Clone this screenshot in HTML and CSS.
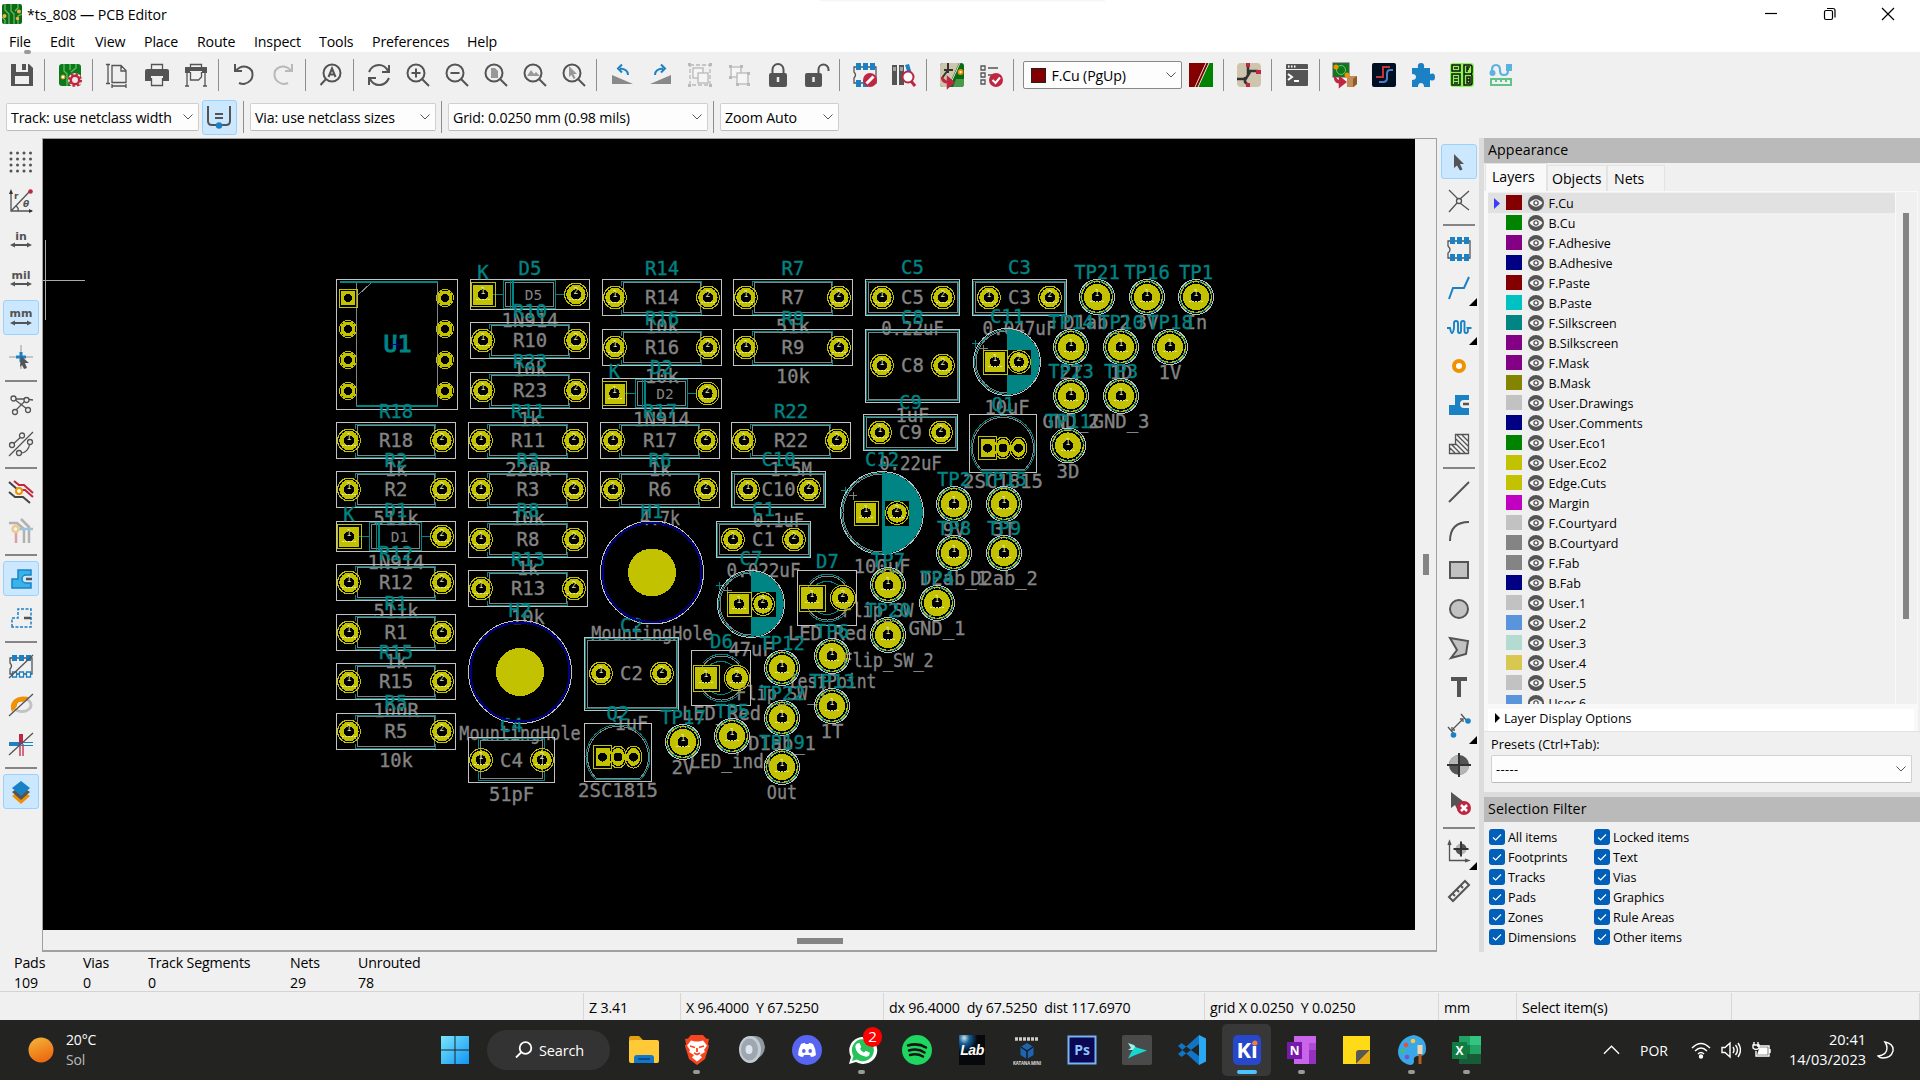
FILE: index.html
```html
<!DOCTYPE html>
<html lang="en">
<head>
<meta charset="utf-8">
<title>*ts_808 — PCB Editor</title>
<link rel="stylesheet" href="styles.css">
</head>
<body>
<div class="window">
  <header class="titlebar">
    <svg class="app-icon" viewBox="0 0 20 20"><rect width="20" height="20" rx="2" fill="#0b6b16"/><path d="M3 0v6l4 4v10M9 0v7l3 3v10M16 0v4l-3 3M20 10l-4 2v8M0 13l3 3v4" fill="none" stroke="#6cc069" stroke-width="1.2"/><g fill="#f6b13c"><circle cx="2.5" cy="12" r="2"/><circle cx="17" cy="7.500" r="2"/><circle cx="15.500" cy="14.500" r="1.700"/></g></svg>
    <span class="title">*ts_808 — PCB Editor</span>
    <span class="notch"></span>
    <div class="controls">
      <svg viewBox="0 0 14 14"><path d="M1 6.500h12"/></svg>
      <svg viewBox="0 0 14 14"><rect x="1.500" y="3.500" width="8" height="9" rx="1.500"/><path d="M4 1.500h6q2 0 2 2v7"/></svg>
      <svg viewBox="0 0 14 14"><path d="M1 1l12 12M13 1L1 13"/></svg>
    </div>
  </header>
  <nav class="menubar"><span>File</span><span>Edit</span><span>View</span><span>Place</span><span>Route</span><span>Inspect</span><span>Tools</span><span>Preferences</span><span>Help</span></nav>

  <div class="toolbar">
    <i><svg viewBox="0 0 24 24"><path fill="#545454" fill-rule="evenodd" d="M1 1h18l4 4v18H1zM6 1v8h12V1h-2v6h-4V1zM5 13v8h14v-8z"/></svg></i><b></b>
    <i><svg viewBox="0 0 24 24"><rect x="1" y="1" width="22" height="22" rx="3" fill="#0b7a1a"/><path d="M6 1v7l3 3v12M12 1v6M18 1v4l-5 4" fill="none" stroke="#63bb63" stroke-width="1.300"/><circle cx="5" cy="14" r="2" fill="#fff" stroke="#f29100"/><circle cx="17" cy="17" r="7" fill="#f0e6e6"/><circle cx="17" cy="17" r="4.200" fill="none" stroke="#bf2641" stroke-width="2.500"/><circle cx="17" cy="17" r="6" fill="none" stroke="#bf2641" stroke-width="2" stroke-dasharray="2.400 2.300"/></svg></i><b></b>
    <i><svg viewBox="0 0 24 24" class="ln"><path d="M6 2.500h9l5 5v12H6zM15 3v5h5M2 1v20M0 1.500h4M0 20.500h4M6 23h14M6 21v4M20 21v4"/></svg></i>
    <i><svg viewBox="0 0 24 24"><path class="ln" d="M6.500 7V1.500h11V7M6.500 15v7.500h11V15"/><path fill="#545454" d="M2 6h20q2 0 2 2v10h-6v-5H6v5H0V8q0-2 2-2z"/></svg></i>
    <i><svg viewBox="0 0 24 24"><path class="ln" d="M6.500 5V1.500h11V5M6.500 9v8h8l3-3V9M3 10v12.500M21 10v12.500M1 23h4M19 23h4"/><path fill="#545454" d="M1 4h22v6h-5V8H6v2H1z"/></svg></i><b></b>
    <i><svg viewBox="0 0 24 24" class="ln h"><path d="M3 1v7h7M3.500 8Q9 2 15 4t5.500 8.500T12 21q-3 0-5-1"/></svg></i>
    <i class="dim"><svg viewBox="0 0 24 24" class="ln h"><path d="M21 1v7h-7M20.500 8Q15 2 9 4t-5.500 8.500T12 21q3 0 5-1"/></svg></i><b></b>
    <i><svg viewBox="0 0 24 24" class="ln h"><circle cx="13" cy="10" r="8.500"/><path d="M7 16l-5.500 6"/><path d="M9.500 14L13 5.500 16.500 14M10.500 11.500h5"/></svg></i><b></b>
    <i><svg viewBox="0 0 24 24" class="ln h"><path d="M2 9Q5 2 12 2q6 0 9 6M22 2v7h-7M22 15q-3 7-10 7-6 0-9-6M2 22v-7h7"/></svg></i>
    <i><svg viewBox="0 0 24 24" class="ln h"><circle cx="10" cy="10" r="8.500"/><path d="M16 16l7 7M5.500 10h9M10 5.500v9"/></svg></i>
    <i><svg viewBox="0 0 24 24" class="ln h"><circle cx="10" cy="10" r="8.500"/><path d="M16 16l7 7M5.500 10h9"/></svg></i>
    <i><svg viewBox="0 0 24 24" class="ln h"><circle cx="10" cy="10" r="8.500"/><path d="M16 16l7 7"/><path d="M7 5h4l3 3v7H7z" fill="#989898" stroke="none"/></svg></i>
    <i><svg viewBox="0 0 24 24" class="ln h"><circle cx="10" cy="10" r="8.500"/><path d="M16 16l7 7"/><path d="M4 13l4-6 3 4 2-2 4 4z" fill="#989898" stroke="none"/></svg></i>
    <i><svg viewBox="0 0 24 24" class="ln h"><circle cx="10" cy="10" r="8.500"/><path d="M16 16l7 7"/><path d="M7 3v11l2.500-2 2 4 2-1-2-4h3.500z" fill="#989898" stroke="none"/></svg></i><b></b>
    <i><svg viewBox="0 0 24 24"><path fill="#898989" d="M2 12v9h21z"/><path d="M18 12q0-6-8-6.500M12 1.500L8 5.500l4 4" fill="none" stroke="#1a81c4" stroke-width="2"/></svg></i>
    <i><svg viewBox="0 0 24 24"><path fill="#898989" d="M22 12v9H1z"/><path d="M6 12q0-6 8-6.500M12 1.500l4 4-4 4" fill="none" stroke="#1a81c4" stroke-width="2"/></svg></i>
    <i class="dim"><svg viewBox="0 0 24 24" class="ln"><rect x="2" y="2" width="20" height="20" stroke-dasharray="4 2"/><rect x="5" y="5" width="10" height="10" fill="#fff"/><rect x="10" y="10" width="10" height="10" fill="#fff"/><path d="M0 0h3v3H0zM21 0h3v3h-3zM0 21h3v3H0zM21 21h3v3h-3z" fill="#545454" stroke="none"/></svg></i>
    <i class="dim"><svg viewBox="0 0 24 24" class="ln"><rect x="4" y="4" width="10" height="10" fill="#fff"/><rect x="10" y="10" width="11" height="11" fill="#fff"/><path d="M2 2h3v3H2zM13 2h3v3h-3zM2 13h3v3H2zM20 9h3v3h-3zM9 20h3v3H9zM20 20h3v3h-3z" fill="#545454" stroke="none"/></svg></i>
    <i><svg viewBox="0 0 24 24"><path d="M6.500 12V6.500a5.500 5.500 0 0 1 11 0V12" fill="none" stroke="#545454" stroke-width="2"/><rect x="3" y="10" width="18" height="14" rx="2" fill="#545454"/><path d="M12 14v5" stroke="#eee" stroke-width="2.500"/></svg></i>
    <i><svg viewBox="0 0 24 24"><path d="M13.500 12V6.500a5 5 0 0 1 10 0V8" fill="none" stroke="#545454" stroke-width="2"/><rect x="0" y="10" width="17" height="14" rx="2" fill="#545454"/><path d="M8.500 14v5" stroke="#eee" stroke-width="2.500"/></svg></i><b></b>
    <i><svg viewBox="0 0 24 24"><path class="ln" d="M1 4h22v16H1v-5q3-3 0-6z"/><path fill="#1a81c4" d="M3 0h5v7H3zM10 0h5v7h-5zM17 0h5v7h-5zM3 17h5v7H3zM10 17h5v7h-5z"/><circle cx="17" cy="17" r="7" fill="#bf2641"/><path d="M13.500 20.500l7-7" stroke="#fff" stroke-width="3"/></svg></i>
    <i><svg viewBox="0 0 24 24"><path fill="#545454" d="M0 2h5v20H0zM7 2h5v20H7z"/><path stroke="#f0f0f0" d="M1 5h3M1 7h3M8 5h3M8 7h3"/><path fill="#1a81c4" d="M13 2l4-1 3 10-3 3z"/><circle cx="16" cy="14" r="5.500" fill="#fff" stroke="#bf2641" stroke-width="2"/><path d="M19 18l4 5" stroke="#bf2641" stroke-width="3"/></svg></i><b></b>
    <i><svg viewBox="0 0 24 24"><rect width="24" height="24" rx="3" fill="#0b6a16"/><path fill="#cfc4ac" d="M3 0h16L8 24H3q-3 0-3-3V3q0-3 3-3z"/><path fill="#4b9a4b" d="M16 16h8v5q0 3-3 3h-8z"/><path d="M8 0v10M4 7h9M8 7l-6 8" stroke="#333" stroke-width="2"/><path d="M20 0L9 24" stroke="#ddd"/><circle cx="20.500" cy="9" r="2" fill="#fff" stroke="#f29100" stroke-width="1.800"/><path d="M2 14q0 6 7 5.500M8 15l5 4.500L8 24z" stroke="#bf2641" stroke-width="2.500" fill="#bf2641"/></svg></i>
    <i><svg viewBox="0 0 24 24"><path class="ln" d="M2 3h4v4H2zM2 10h4v4H2zM2 17h4v4H2zM9 5h10M9 12h6"/><circle cx="17" cy="17" r="7" fill="#bf2641"/><path d="M13.500 17l3 3 4.500-5.500" fill="none" stroke="#fff" stroke-width="2"/></svg></i><b></b>
    <div class="combo layer"><em></em><span>F.Cu (PgUp)</span><svg viewBox="0 0 10 6"><path d="M.5.5L5 5 9.500.5"/></svg></div>
    <i class="tight"><svg viewBox="0 0 24 24"><path fill="#840000" d="M0 0h20L9 24H0z"/><path fill="#008400" d="M20 0h4v24H9z"/><path d="M17 0L6 24M20 0L9 24" stroke="#ddd"/></svg></i><b></b>
    <i><svg viewBox="0 0 24 24"><rect width="24" height="24" rx="4" fill="#cfc4ac"/><path d="M11 3v10M11 8h10M13 9l-5 8M0 16h7M8 14v5l4 4" fill="none" stroke="#333" stroke-width="2.500"/><path fill="#bf2641" d="M9 0h4v4H9zM19 7h5v4h-5zM9 20h4v4H9z"/></svg></i><b></b>
    <i><svg viewBox="0 0 24 24"><path fill="#545454" d="M1 2q0-1 1-1h20q1 0 1 1v4H1zM1 7h22v15q0 1-1 1H2q-1 0-1-1z"/><path stroke="#fff" stroke-width="2" fill="none" d="M3 3.500h1.500M6 3.500h1.500M9 3.500h1.500M3 11l4 3-4 3M9 18h5"/></svg></i><b></b>
    <i><svg viewBox="0 0 24 24"><rect x="0" y="0" width="16" height="14" fill="#0b7a1a" stroke="#545454"/><circle cx="8" cy="7" r="4.500" fill="none" stroke="#6fc06f"/><circle cx="3" cy="4" r="2.500" fill="#f29100"/><circle cx="14" cy="12" r="2.500" fill="#f29100"/><path d="M2 14q0 6 6 5M7 15l5 4-5 4z" fill="#bf2641" stroke="#bf2641" stroke-width="2.500"/><path fill="#c58c54" d="M14 15l3-2h7v8l-3 3h-7z"/><path fill="#8d5b30" d="M20 16l4-3v8l-4 3z"/></svg></i>
    <i><svg viewBox="0 0 24 24"><rect width="24" height="24" rx="2" fill="#001023"/><path d="M18 4h-7v10H4" fill="none" stroke="#c83434" stroke-width="2"/><path d="M21 7h-3q-3 0-3 4v4q0 4-4 4H7" fill="none" stroke="#4d7fc4" stroke-width="2"/></svg></i>
    <i><svg viewBox="0 0 24 24"><path fill="#1a81c4" d="M1 5h6q-1-5 3-5t3 5h6v6q5-2 5 3t-5 3v7h-6q0-4-3-4t-3 4H1v-7q4 0 4-3t-4-3z"/></svg></i>
    <i><svg viewBox="0 0 24 24"><rect width="24" height="24" rx="3" fill="#8cf650"/><path fill="none" stroke="#111" stroke-width="1.500" d="M2 2h8v6H2zM2 11h8v11H2zM14 2h6q2 0 2 2v5q0 2-2 2 2 0 2 2v7q0 2-2 2h-6zM14 11h6M4 5h4M4 14h4M4 17h4M4 20h4M17 9V4h3M17 6h2M17 14v6h3v-6zM17 17h3"/></svg></i>
    <i><svg viewBox="0 0 24 24"><path d="M3 10V7q0-5 4-5t4 5v1q0 4 4 4t4-4V2" fill="none" stroke="#59b2e0" stroke-width="2.200"/><circle cx="3.500" cy="10" r="3" fill="#59b2e0"/><path fill="#59b2e0" d="M17 1h6v7h-6z"/><path fill="none" stroke="#5fc486" stroke-width="2" d="M2 16h20v6H2zM7 16v3M12 16v3M17 16v3"/></svg></i>
  </div>

  <div class="toolbar second">
    <div class="combo track"><span>Track: use netclass width</span><svg viewBox="0 0 10 6"><path d="M.5.5L5 5 9.500.5"/></svg></div>
    <i class="on"><svg viewBox="0 0 24 24" class="ln h"><path d="M1 1v15q0 4 4 4h14q4 0 4-4V1M8 9h8M8 13h8"/><circle cx="12" cy="20.500" r="3.200" fill="#1a81c4" stroke="none"/></svg></i><b></b>
    <div class="combo via"><span>Via: use netclass sizes</span><svg viewBox="0 0 10 6"><path d="M.5.5L5 5 9.500.5"/></svg></div><b></b>
    <div class="combo grid"><span>Grid: 0.0250 mm (0.98 mils)</span><svg viewBox="0 0 10 6"><path d="M.5.5L5 5 9.500.5"/></svg></div><b></b>
    <div class="combo zoom"><span>Zoom Auto</span><svg viewBox="0 0 10 6"><path d="M.5.5L5 5 9.500.5"/></svg></div>
  </div>

  <main class="work">
    <aside class="tools">
      <i><svg viewBox="0 0 24 24"><path d="M2 3h21M2 9h21M2 15h21M2 21h21" stroke="#545454" stroke-width="3" stroke-linecap="round" stroke-dasharray="0 6.500"/></svg></i>
      <i><svg viewBox="0 0 24 24" class="ln"><path d="M2 3v19h21M2 22L21 2M7 17q3 2 2 5"/><path fill="#333" stroke="none" d="M0 5l2-5 2 5zM20 20l4 2-4 2z"/><circle cx="21.500" cy="2.500" r="2.300" fill="#bf2641" stroke="none"/><text x="5" y="10" class="ti s">r</text><text x="14" y="18" class="ti s it">θ</text></svg></i>
      <i><svg viewBox="0 0 24 24"><text x="12" y="12" class="ti">in</text><path fill="#545454" d="M1 17l5-2.500v1.500h12v-1.500l5 2.500-5 2.500V18H6v1.500z"/></svg></i>
      <i><svg viewBox="0 0 24 24"><text x="12" y="12" class="ti">mil</text><path fill="#545454" d="M1 17l5-2.500v1.500h12v-1.500l5 2.500-5 2.500V18H6v1.500z"/></svg></i>
      <i class="on"><svg viewBox="0 0 24 24"><text x="12" y="11" class="ti">mm</text><path fill="#545454" d="M1 17l5-2.500v1.500h12v-1.500l5 2.500-5 2.500V18H6v1.500z"/></svg></i>
      <i><svg viewBox="0 0 24 24"><path d="M12 0v24M0 12h24" stroke="#999"/><path d="M12 7v10M7 12h10" stroke="#1a81c4" stroke-width="3"/><path fill="#545454" d="M12 11l8 7h-4l2 5-3 1-2-4-2 2z"/></svg></i><b></b>
      <i><svg viewBox="0 0 24 24" class="ln"><path d="M5 6h12l7 1M6 18L17 7M5 6l13 10"/><g fill="#f0f0f0"><circle cx="4.500" cy="5.500" r="2.500"/><circle cx="17.500" cy="7" r="2.500"/><circle cx="6" cy="19" r="2.500"/><circle cx="19" cy="17" r="2.500"/></g></svg></i>
      <i><svg viewBox="0 0 24 24" class="ln"><path d="M0 24L24 0M3 13l10-9M10 21q9 1 11-10"/><g fill="#f0f0f0"><circle cx="3" cy="13" r="2.500"/><circle cx="13" cy="3.500" r="2.500"/><circle cx="21" cy="10" r="2.500"/><circle cx="10" cy="21" r="2.500"/></g></svg></i><b></b>
      <i><svg viewBox="0 0 24 24" fill="none" stroke-width="2"><path d="M0 2l9 8M0 12l6 5h8l7 6" stroke="#444"/><path d="M5 1l5 4h5l9 8M12 10h4l8 7" stroke="#bf2641"/><circle cx="10" cy="11" r="3" stroke="#f29100" fill="#fff"/></svg></i>
      <i class="pale"><svg viewBox="0 0 24 24" fill="none" stroke-width="2.500"><path d="M7 11v13" stroke="#bf2641"/><path d="M0 4h8l7 6v14M12 0l8 8v16" stroke="#545454"/><path d="M9 10h15" stroke="#1a81c4"/><circle cx="6.500" cy="10" r="3" stroke="#f29100" fill="#fff"/></svg></i><b></b>
      <i class="on"><svg viewBox="0 0 24 24"><path d="M3 21v-9h6V3h13v5h-5a4 4 0 0 0 0 8h5v5z" fill="#39b4ea" stroke="#1a81c4" stroke-width="1.500"/><path d="M17 12h6" stroke="#545454" stroke-width="2.500"/></svg></i>
      <i><svg viewBox="0 0 24 24"><path d="M3 21v-9h6V3h13v18z" fill="none" stroke="#1a81c4" stroke-width="1.500" stroke-dasharray="3 1.500"/><path d="M15 12h7" stroke="#545454" stroke-width="2.500"/></svg></i><b></b>
      <i><svg viewBox="0 0 24 24"><path class="ln" d="M1 4h22v16H1v-5q3-3 0-6z"/><path fill="#1a81c4" d="M3 1h5v6H3zM10 1h5v6h-5zM17 1h5v6h-5z"/><path fill="#fff" stroke="#1a81c4" stroke-width="1.300" d="M3.500 18h4v5h-4zM10.500 18h4v5h-4zM17.500 18h4v5h-4z"/><path class="ln" d="M0 24L24 1"/></svg></i>
      <i><svg viewBox="0 0 24 24"><ellipse cx="13" cy="12" rx="9" ry="6.500" fill="none" stroke="#c2c2c2" stroke-width="3"/><path d="M3 19Q0 12 5 7t15-3l-6 5q-6-1-6 4z" fill="#f29100"/><path class="ln" d="M0 23L24 1"/></svg></i>
      <i><svg viewBox="0 0 24 24"><path d="M0 12h11" stroke="#1a81c4" stroke-width="4"/><path d="M12 2v10" stroke="#bf2641" stroke-width="4"/><path d="M11 12v12M14 12v12" stroke="#bf2641" stroke-width="1.300"/><path d="M12 10.500h12M12 13.500h12" stroke="#1a81c4"/><path class="ln" d="M0 23L24 1"/></svg></i><b></b>
      <i class="on"><svg viewBox="0 0 24 24"><path fill="#f29100" d="M3 16l9-6 9 6-9 8z"/><path fill="#545454" d="M3 12l9-6 9 6-9 8z"/><path fill="#1a81c4" d="M3 8l9-7 9 7-9 8z"/></svg></i>
    </aside>

    <section class="viewport">
      <div class="board"><svg id="pcb" viewBox="43 139 1372 791" width="1372" height="791"></svg></div>
      <div class="vscroll"><span></span></div>
      <div class="hscroll"><span></span></div>
    </section>

    <aside class="tools right">
      <i class="on"><svg viewBox="0 0 24 24"><path fill="#545454" d="M7 4v14l3-2.500 3 5 2.500-1-2.500-5.500h4z"/></svg></i>
      <i><svg viewBox="0 0 24 24" class="ln"><path d="M2 1l9 9M22 2l-9 8M2 23l8-9M22 21l-9-7"/><circle cx="12" cy="12" r="2.500"/></svg></i><b></b>
      <i><svg viewBox="0 0 24 24"><path class="ln" d="M1 4h22v17H1v-5q4-3 0-7z"/><path fill="#1a81c4" d="M3 0h5v7H3zM10 0h5v7h-5zM17 0h5v7h-5zM3 17h5v7H3zM10 17h5v7h-5zM17 17h5v7h-5z"/></svg></i>
      <i class="more"><svg viewBox="0 0 24 24"><path d="M2 23l4-11h11l5-11" fill="none" stroke="#1a81c4" stroke-width="2"/></svg></i>
      <i class="more"><svg viewBox="0 0 24 24"><path d="M0 13h3q1 5 2 5t2-5V8q0-2 2-2t2 2v8q0 2 1.500 2t1.500-2V8q0-2 2-2t1.500 2v8q0 2 1.500 2 3 0 1.500-5h4" fill="none" stroke="#1a81c4" stroke-width="1.900"/></svg></i>
      <i><svg viewBox="0 0 24 24"><circle cx="12" cy="12" r="5" fill="#fff" stroke="#f29100" stroke-width="4"/></svg></i>
      <i><svg viewBox="0 0 24 24"><path d="M2 22V12h6V2h14v5h-5a4 4 0 0 0 0 8h5v7z" fill="#1a81c4"/><path d="M16 11h6" stroke="#545454" stroke-width="2.500"/></svg></i>
      <i><svg viewBox="0 0 24 24" class="ln"><path d="M2.500 21.500v-9h6v-10h13v19zM3 16l5 5M4 12l9 9M9 12l9 9M9 7l12 12M10 3l11 11M15 3l6 6" /></svg></i><b></b>
      <i><svg viewBox="0 0 24 24" class="ln h"><path d="M2 22L22 2"/></svg></i>
      <i><svg viewBox="0 0 24 24" class="ln h"><path d="M3 22Q3 3 22 3"/></svg></i>
      <i><svg viewBox="0 0 24 24" class="ln h"><rect x="3" y="4" width="18" height="16" fill="#c2c2c2"/></svg></i>
      <i><svg viewBox="0 0 24 24" class="ln h"><circle cx="12" cy="12" r="9" fill="#c2c2c2"/></svg></i>
      <i><svg viewBox="0 0 24 24" class="ln h"><path d="M3 2l18 3-2 13-15 4 6-8z" fill="#c2c2c2"/></svg></i>
      <i><svg viewBox="0 0 24 24"><path fill="#545454" d="M4 2h16v4h-6v16h-4V6H4z"/></svg></i>
      <i class="more"><svg viewBox="0 0 24 24" class="ln"><path d="M6 15L15 6M1 13l6 7M14 0l6 7"/><path d="M5 13v3h3M13 5h3v3"/><circle cx="21" cy="7" r="2.800" fill="#1a81c4" stroke="none"/><circle cx="6.500" cy="21" r="2.800" fill="#1a81c4" stroke="none"/></svg></i>
      <i><svg viewBox="0 0 24 24"><circle cx="12" cy="12" r="10" fill="#545454"/><path fill="#b5b5b5" d="M12 12V2A10 10 0 0 0 2 12zM12 12v10a10 10 0 0 0 10-10z"/><path d="M12 0v24M0 12h24" stroke="#333" stroke-width="2"/></svg></i>
      <i><svg viewBox="0 0 24 24"><path fill="#545454" d="M4 0v16l4-3 3 6 6-9z"/><circle cx="17" cy="16" r="7" fill="#bf2641"/><path d="M14 13l6 6M20 13l-6 6" stroke="#fff" stroke-width="2.500"/></svg></i><b></b>
      <i class="more"><svg viewBox="0 0 24 24" class="ln"><path d="M2.500 2v18.500H22M1 5l1.500-4L4 5M18 19l4 1.500-4 1.500"/><circle cx="14" cy="9" r="5.500" fill="#b5b5b5" stroke="none"/><path fill="#545454" stroke="none" d="M14 9V3.500A5.500 5.500 0 0 1 19.500 9zM14 9v5.500A5.500 5.500 0 0 1 8.500 9z"/><path d="M14 1.500v15M6.500 9h15" stroke="#333" stroke-width="2"/></svg></i>
      <i><svg viewBox="0 0 24 24" class="ln h"><path d="M2 18L18 2l4 4L6 22zM6 15l2 2M10 11l2 2M14 7l2 2"/></svg></i>
    </aside>

    <aside class="panel">
      <h2>Appearance</h2>
      <div class="tabs"><span class="active">Layers</span><span>Objects</span><span class="nets">Nets</span></div>
      <div class="layers"><div class="rows" id="layers"></div><div class="gutter"><span></span></div></div>
      <div class="options"><svg viewBox="0 0 5 10"><path d="M0 0l5 5-5 5z"/></svg>Layer Display Options</div>
      <div class="presets"><label>Presets (Ctrl+Tab):</label><div class="combo"><span>-----</span><svg viewBox="0 0 10 6"><path d="M.5.5L5 5 9.500.5"/></svg></div></div>
      <h2 class="filter-title">Selection Filter</h2>
      <div class="filters" id="filters"></div>
    </aside>
  </main>

  <section class="info">
    <div><span>Pads</span><span>109</span></div><div><span>Vias</span><span>0</span></div><div><span>Track Segments</span><span>0</span></div><div><span>Nets</span><span>29</span></div><div><span>Unrouted</span><span>78</span></div>
  </section>
  <footer class="status"><span></span><span>Z 3.41</span><span>X 96.4000&nbsp; Y 67.5250</span><span>dx 96.4000&nbsp; dy 67.5250&nbsp; dist 117.6970</span><span>grid X 0.0250&nbsp; Y 0.0250</span><span>mm</span><span>Select item(s)</span><span></span></footer>

  <div class="taskbar">
    <div class="weather"><svg viewBox="0 0 26 26"><defs><linearGradient id="sun" x1="0" y1="0" x2=".4" y2="1"><stop stop-color="#f3b83c"/><stop offset="1" stop-color="#ee6b10"/></linearGradient></defs><circle cx="13" cy="13" r="12.500" fill="url(#sun)"/></svg><p>20°C<br><small>Sol</small></p></div>
    <div class="apps">
      <a><svg viewBox="0 0 30 30"><defs><linearGradient id="win" x1="0" y1="0" x2="1" y2="1"><stop stop-color="#79e6fc"/><stop offset="1" stop-color="#1095f5"/></linearGradient></defs><path fill="url(#win)" d="M1 1h13.500v13.500H1zM15.500 1H29v13.500H15.500zM1 15.500h13.500V29H1zM15.500 15.500H29V29H15.500z"/></svg></a>
      <div class="search"><svg viewBox="0 0 18 18"><circle cx="10.500" cy="7" r="5.800"/><path d="M6.500 11L1 16.500"/></svg>Search</div>
      <a class="files"><svg viewBox="0 0 30 30"><path fill="#e3a012" d="M0 3q0-2 2-2h8l4 4H2v10H0z"/><rect y="5" width="30" height="23" rx="2" fill="#ffc937"/><path fill="#1178c8" d="M5 28v-5q0-3 3-3h14q3 0 3 3v5z"/><path d="M9 24h12" stroke="#0a4c8c" stroke-width="2"/></svg></a>
      <a class="run"><svg viewBox="0 0 30 30"><path fill="#f8451f" d="M9 0h12l3 3.500 3 .5-1 5 1 2-4 13-8 6-8-6L3 11l1-2-1-5 3-.5z"/><path fill="#fff" d="M9 5.500l4 1h4l4-1 4 5-3 4.500 1 2-5 3 2 2.500-5 4-5-4 2-2.500-5-3 1-2-3-4.500z"/><path d="M8 11l5 1.500M22 11l-5 1.500M15 13v4M12 18l3 1.500 3-1.500" stroke="#f8451f" stroke-width="1.800" fill="none"/></svg></a>
      <a><svg viewBox="0 0 30 30"><path fill="#8f979f" d="M13 1h6q8 1 9 11 0 5-4 9l-11 7z"/><ellipse cx="13" cy="14.500" rx="11" ry="13.500" fill="#c5cbd1"/><ellipse cx="12.500" cy="14.500" rx="8.500" ry="11" fill="#9ea7b1"/><ellipse cx="12" cy="14.500" rx="3.500" ry="4.500" fill="#dfe5ec"/></svg></a>
      <a><svg viewBox="0 0 30 30"><circle cx="15" cy="15" r="15" fill="#5865f2"/><path fill="#fff" d="M9 9q3-1.500 4-1l.5 1h3l.5-1q1-.5 4 1 3 5 3 11-2 2-5 2l-1-2h-6l-1 2q-3 0-5-2 0-6 3-11z"/><ellipse cx="11.800" cy="16" rx="1.800" ry="2" fill="#5865f2"/><ellipse cx="18.200" cy="16" rx="1.800" ry="2" fill="#5865f2"/></svg></a>
      <a class="run"><svg viewBox="0 0 30 30"><path fill="#fff" d="M2 29l2-7A14 13.500 0 1 1 9 27z"/><path fill="#25c35a" d="M5 26l1.500-5A11 11 0 1 1 10 24.500z"/><path fill="#fff" d="M10 8.500l2.500-.5 1.800 4-1.300 1.800q1.500 3 4 3.800l1.800-1.800 4 2q-.3 4-4 4-10-2-10.500-10 0-2 1.700-3.300z"/></svg><u>2</u></a>
      <a><svg viewBox="0 0 30 30"><circle cx="15" cy="15" r="15" fill="#1ed760"/><path d="M6 10.500q10-3 18 2M7 15.500q9-2.500 15.500 2M8 20q7-2 13 1.500" fill="none" stroke="#191414" stroke-width="2.500" stroke-linecap="round"/></svg></a>
      <a><svg viewBox="0 0 30 30"><defs><radialGradient id="lab" cx=".2" cy=".1"><stop stop-color="#c9e7e4"/><stop offset=".4" stop-color="#145f9c"/><stop offset="1" stop-color="#07080c"/></radialGradient></defs><path fill="url(#lab)" d="M2 0h26v30H2z"/><text x="15" y="20" class="lab">Lab</text></svg></a>
      <a><svg viewBox="0 0 30 30"><path d="M3 4h24" stroke="#ccc" stroke-width="3.500" stroke-dasharray="3 1"/><path fill="#1f65ad" d="M8.500 12l6.500-4 6.500 4v8L15 24l-6.500-4z"/><path d="M9 12l6 4 6-4M15 16v8" stroke="#101c30" stroke-width="1.500" fill="none"/><text x="15" y="29.500" class="kat">KATANA MINI</text></svg></a>
      <a><svg viewBox="0 0 30 30"><rect x="1.500" y="1.500" width="27" height="27" fill="#0c0753" stroke="#74b5f5" stroke-width="2"/><text x="15" y="20" class="ps">Ps</text></svg></a>
      <a><svg viewBox="0 0 30 30"><rect width="30" height="30" rx="2" fill="#4a4a4a"/><path fill="#a0f0e8" d="M6 8l6 2 4 5H6l3-2z"/><path fill="#15d8d0" d="M13 12l12 3.500-13 5-6 3 3-6z"/></svg></a>
      <a><svg viewBox="0 0 30 30"><path fill="#1274c4" d="M22 0L1 19l3.500 3L22 9zM1 11l3.500-3L22 21v9z"/><path fill="#2aa9f2" d="M22 0l7 3.500v23L22 30z"/></svg></a>
      <a class="active"><svg viewBox="0 0 30 30"><rect x="1" y="0" width="28" height="30" rx="5" fill="#2747cc"/><text x="15" y="23" class="ki">Ki</text><circle cx="23" cy="8" r="2.500" fill="#f47c2c"/></svg></a>
      <a class="run"><svg viewBox="0 0 30 30"><path fill="#ca64ea" d="M7 1h22v28H7z"/><path fill="#9332bf" d="M22 15h7v14h-7z"/><path fill="#ae4bd5" d="M22 8h7v7h-7z"/><path fill="#7719aa" d="M0 7h15v17H0z"/><text x="7.500" y="20" class="of">N</text></svg></a>
      <a><svg viewBox="0 0 30 30"><path fill="#ffda16" d="M1 1h27v28H1z"/><path fill="#5a5850" d="M14 29V18q0-3 3-3h11z"/><path fill="#e8ae12" d="M28 15v14H14z"/></svg></a>
      <a class="run"><svg viewBox="0 0 30 30"><path fill="#39a7e8" d="M17 0q12 2 12 14 0 6-5 7h-4q-4 1-3 5 0 4-4 4Q1 27 1 16 3 2 17 0z"/><circle cx="9" cy="10" r="2.300" fill="#e64f39"/><circle cx="16" cy="6" r="2.300" fill="#fac83c"/><circle cx="6" cy="16" r="2.300" fill="#3cc36c"/><circle cx="10" cy="22" r="2.300" fill="#7b50d4"/><path d="M23 10v9" stroke="#ead6b5" stroke-width="5"/><path d="M23 19v10" stroke="#b66020" stroke-width="3"/></svg></a>
      <a class="run"><svg viewBox="0 0 30 30"><path fill="#21a366" d="M7 1h22v28H7z"/><path fill="#33c481" d="M18 1h11v9H18z"/><path fill="#107c41" d="M7 10h11v9H7z"/><path fill="#185c37" d="M7 19h22v10H7z"/><path fill="#107c41" d="M0 7h15v17H0z"/><text x="7.500" y="20" class="of">X</text></svg></a>
    </div>
    <div class="tray">
      <svg viewBox="0 0 18 12" class="up"><path d="M1 10l8-8 8 8"/></svg><span>POR</span>
      <svg viewBox="0 0 20 18"><path d="M1 7q9-9 18 0M4 10q6-6 12 0M7 13q3-3 6 0"/><circle cx="10" cy="15.500" r="1.500" fill="#fff"/></svg>
      <svg viewBox="0 0 20 18"><path d="M1 6.500h3L9 2v14l-5-4.500H1zM12 6q2 3 0 6M14.500 4q4 5 0 10M17 2q5 7 0 14"/></svg>
      <svg viewBox="0 0 20 18"><path d="M6 5h12v10H5v-5M19 8v4M3 1v3M7 1v3M2 4h6v3q-3 3-6 0z"/><path fill="#fff" d="M9 7h7v6H7z"/></svg>
      <p>20:41<br>14/03/2023</p>
      <svg viewBox="0 0 18 18" class="moon"><path d="M8 1q9 2 8 9-2 7-10 7-3 0-5-2 9-1 9-8 0-3-2-6z"/></svg>
    </div>
  </div>
</div>
<script src="script.js"></script>
</body>
</html>
```
FILE: styles.css
```css
*{box-sizing:border-box}
body{margin:0;width:1920px;height:1080px;overflow:hidden;background:#f0f0f0;font-family:"Open Sans","Noto Sans",sans-serif;font-size:14.2px;color:#000;letter-spacing:-.15px}
.window{display:flex;flex-direction:column;height:1080px}
svg{display:block;flex:none}
p,h2{margin:0;font-weight:400}
.titlebar{height:28px;background:#fff;display:flex;align-items:center;padding-left:2px;flex:none}
.app-icon{width:20px;height:20px}
.title{margin-left:5px;width:793px;line-height:28px;padding-top:1px;letter-spacing:-.1px}
.notch{width:285px;height:2px;align-self:flex-start;background:linear-gradient(#f3f3f3,#fff)}
.controls{margin-left:auto;display:flex;gap:44.500px;margin-right:25px}
.controls svg{width:14px;height:14px;fill:none;stroke:#000;stroke-width:1.2}
.menubar{height:24px;flex:none;background:#fff;display:grid;grid-template-columns:41px 45px 49px 53px 57px 65px 53px 95px 60px;padding-left:9px;line-height:27px}
.toolbar{height:46px;flex:none;display:flex;align-items:center;padding-left:4.500px}
.toolbar.second{height:40px;padding:0 0 2px 6px;align-items:center}
i{width:35px;height:35px;margin-right:4px;display:grid;place-items:center;flex:none;font-style:normal;border-radius:3px;position:relative}
i svg{width:24px;height:24px;overflow:visible}
.toolbar b{width:2px;height:32px;background:#8e8e8e;margin:0 6.500px 0 .500px;flex:none;border-right:1px solid #f0f0f0}
.on{background:#cce8ff;border:1px solid #99d1ff}
.dim{opacity:.35}
.pale{opacity:.4}
.ln{fill:none;stroke:#545454;stroke-width:1.3}
.ln.h{stroke-width:2}
.ti{font:700 11px "DejaVu Sans",sans-serif;fill:#545454;text-anchor:middle;letter-spacing:0;stroke:none}
.ti.s{font-size:9px;text-anchor:start}.it{font-style:italic}
.combo{height:28px;background:#fdfdfd;border:1px solid #d0d0d0;border-bottom-color:#bbb;border-radius:2px;display:flex;align-items:center;justify-content:space-between;padding:0 5px 0 4px;flex:none;white-space:nowrap}
.combo svg{width:10px;height:6px;fill:none;stroke:#555}
.combo.layer{width:159px;border-color:#888;margin:0 2px 0 1px;padding-left:7px}
.combo.layer em{width:15px;height:15px;background:#840000;border:1px solid #222;margin-right:6px}
.combo.layer span{flex:1}
.track{width:193px}
.second i{margin:0 5px 0 3px;padding-right:1px}
.second b{margin:0 5.500px 0 .5px}
.via{width:186px;margin-right:4px}.grid{width:260px;margin-right:4px}.zoom{width:119px}
.work{height:814px;flex:none;display:flex}
.tools{width:42px;padding:6px 0 0 3px;flex:none}
.tools i{width:36px;margin:0 0 4px}
.tools b{display:block;height:1.500px;width:32px;background:#858585;margin:6px 0 5.500px 2px}
.tools.right{width:42px;padding-left:4px}
.more::after{content:"";position:absolute;right:0;bottom:-1px;border-left:8px solid transparent;border-bottom:8px solid #000}
.viewport{width:1395px;height:814px;border:1px solid #a0a0a0;border-bottom-width:2px;display:grid;grid-template:791px 20px/1372px 21px;flex:none}
.board{background:#000;overflow:hidden}
.vscroll{padding:415px 0 0 8px}.vscroll span{display:block;width:6px;height:21px;background:#858585}
.hscroll{padding:8px 0 0 754px}.hscroll span{display:block;width:46px;height:6px;background:#858585}
.panel{flex:1;border-left:5px solid #dcdcdc;display:flex;flex-direction:column}
.panel h2{height:25px;background:#bababa;font-size:14.200px;line-height:24px;padding-left:4px;flex:none;letter-spacing:.1px}
.tabs{height:28px;display:flex;align-items:flex-end;padding-left:1px;flex:none}
.tabs span{height:26px;border:1px solid #e3e3e3;border-bottom:0;background:#f3f3f3;line-height:25px;padding-left:4px;width:60px;letter-spacing:-.05px}
.tabs .active{height:28px;background:#f9f9f9;width:62px;padding-left:6px;line-height:25px}
.tabs .nets{width:58px;padding-left:6px}
.layers{height:518px;flex:none;display:flex;padding:1px 0 5px 4px;background:#f9f9f9;margin-right:2px;font-size:12.500px;letter-spacing:0}
.rows{width:407px;overflow:hidden;background:#f0f0f0;padding-top:1px}
.row{height:20px;display:flex;align-items:center}
.row.sel{background:#e1e1e1}
.row .mark{width:18px;padding-left:6px}
.row .mark svg{width:6px;height:11px;fill:#3c3cff}
.row em{width:16px;height:15px;margin:0 6px 1px 0}
.row .eye{width:16px;height:16px;margin-right:4.500px}
.gutter{width:21px;background:#f0f0f0;margin-left:1px;padding:21px 0 0 7px}
.gutter span{display:block;width:6px;height:406px;background:#858585}
.options{height:22px;flex:none;background:#fff;border:solid #f9f9f9;border-width:0 4px 0 4px;display:flex;align-items:center;padding-left:7px;font-size:12.600px;letter-spacing:0;margin-right:2px;padding-bottom:4px}
.options svg{width:5px;height:10px;margin-right:4px}
.presets{height:61px;flex:none;border-top:1px solid #e2e2e2;padding:3px 8px 0 7px;font-size:12.700px}
.presets label{display:block;line-height:19px;height:20px;letter-spacing:.05px}
.presets .combo{letter-spacing:.4px;height:28px}
.panel .filter-title{border-top:5px solid #dcdcdc;height:30px}
.filters{display:grid;grid-template-columns:105px 150px;grid-auto-rows:20px;padding:5px 0 0 5px;font-size:12.600px;letter-spacing:-.1px}
.filters div{display:flex;align-items:center;gap:3px}
.filters svg{width:16px;height:16px}
.info{height:40px;flex:none;display:grid;grid-template-columns:69px 65px 142px 68px 120px;padding:1px 0 0 14px;border-bottom:1px solid #d4d4d4;line-height:20px}
.info div{display:grid;grid-template-rows:20px 18px}
.status{height:28px;flex:none;display:grid;grid-template-columns:584px 97px 203px 321px 234px 78px 215px 1fr;line-height:29px;white-space:pre}
.status span{border-right:1px solid #d7d7d7;padding-left:5px;margin:1px 0}
.taskbar{height:60px;background:#232422;color:#fff;display:flex;position:relative;flex:none}
.weather{display:flex;align-items:center;width:427px;padding-left:28px;flex:none}
.weather svg{width:26px;height:26px;margin-right:12px}
.weather p{line-height:20px;font-size:14px}.weather small{font-size:14px;color:#bbb}
.apps{display:flex;align-items:center}
.apps a{width:55px;height:60px;display:grid;place-items:center;position:relative;margin:0}
.apps .files{margin-right:-2px}
.apps a>svg{width:30px;height:30px;overflow:visible;position:relative}
.search{width:123px;height:40px;border-radius:20px;background:#333;display:flex;align-items:center;padding-left:28px;margin:0 6px 0 5px;font-size:14.500px}
.search svg{width:18px;height:18px;fill:none;stroke:#fff;stroke-width:1.8;margin-right:6px}
.run::after,.active::after{content:"";position:absolute;left:24px;top:50px;width:7px;height:4px;border-radius:2px;background:#999}
.apps .active::before{content:"";position:absolute;left:3px;top:4px;width:49px;height:52px;background:#383838;border-radius:5px}
.apps .active::after{left:18px;width:20px;background:#4cc2ff}
.apps u{position:absolute;left:29px;top:7px;width:19px;height:20px;border-radius:10px;background:#f00;text-align:center;line-height:19px;text-decoration:none;font-size:15px}
.lab{font:italic 700 14px "Liberation Sans",sans-serif;fill:#fff;text-anchor:middle;letter-spacing:-.5px}
.kat{font:700 4.4px "Open Sans",sans-serif;fill:#ddd;text-anchor:middle}
.ps{font:700 14px "Open Sans",sans-serif;fill:#8bc4fc;text-anchor:middle}
.ki{font:700 22px "Open Sans",sans-serif;fill:#fff;text-anchor:middle}
.of{font:700 12px "Open Sans",sans-serif;fill:#fff;text-anchor:middle}
.tray{margin-left:auto;display:flex;align-items:center;padding-right:25px;font-size:14px}
.tray svg{width:20px;height:18px;fill:none;stroke:#fff;stroke-width:1.4;margin-right:10px}
.tray .up{width:17px;height:12px;margin-right:20px}
.tray span{margin-right:23px;letter-spacing:0}
.tray p{text-align:right;line-height:20px;width:85px;font-size:14.500px;letter-spacing:0}
.tray .moon{width:18px;margin:0 0 0 11px}
#pcb text{font-family:"DejaVu Sans Mono","Liberation Mono",monospace;font-size:19px;letter-spacing:0}
#pcb{shape-rendering:crispEdges}
```
FILE: script.js
```js
const SILK = '#008484', FAB = '#848484', YARD = '#c2c2c2', CU = '#c2c200', BLUE = '#000084';
const layers = { fab: '', silk: '', yard: '', cu: '', ink: '', names: '' };

const rect = (x, y, w, h, c, sw = 1, f = 'none') => `<rect x="${x}" y="${y}" width="${w}" height="${h}" fill="${f}" stroke="${c}" stroke-width="${sw}"/>`;
const circ = (x, y, r, c, sw = 1, f = 'none', d = '') => `<circle cx="${x}" cy="${y}" r="${r}" fill="${f}" stroke="${c}" stroke-width="${sw}" stroke-dasharray="${d}"/>`;
const path = (d, c, sw = 1, f = 'none') => `<path d="${d}" fill="${f}" stroke="${c}" stroke-width="${sw}"/>`;

// stroke-font advance widths in pixels
function width(s) {
  let w = 0;
  for (const c of s) w += 'il.'.includes(c) ? 6 : c === 't' ? 8 : /[a-z]/.test(c) ? 11 : c === 'M' ? 13 : 11.4;
  return w;
}
const text = (s, x, y, c, size = 19, extra = '') => `<text x="${x}" y="${y + size * .365}" fill="${c}" stroke="${c}" stroke-width="${size < 16 ? 0 : .35}" text-anchor="middle" style="font-size:${size}px" textLength="${(width(s) * size / 19).toFixed(1)}" lengthAdjust="spacingAndGlyphs" ${extra}>${s}</text>`;

function pinInk(x, y, n) {
  layers.ink += `<text x="${x}" y="${y - 1}" fill="#e9e9b0" text-anchor="middle" style="font-size:8px">${n}</text>` + `<path d="M${x - 7} ${y + 4.500}h14" stroke="#e6e69a" stroke-width="1" stroke-dasharray="2 1"/>`;
}
function pad(x, y, n, r = 9.700) {
  layers.cu += circ(x, y, (r + 5.200) / 2, CU, r - 5.200, 'none') + circ(x, y, r + 1.700, CU);
  pinInk(x, y, n);
}
function square(x, y, n, s = 20) {
  layers.cu += rect(x - s / 2, y - s / 2, s, s, 'none', 0, CU) + rect(x - s / 2 - 2, y - s / 2 - 2, s + 4, s + 4, CU) + circ(x, y, 5.200, 'none', 0, '#000');
  pinInk(x, y, n);
}
const label = (s, x, y) => { layers.names += text(s, x, y, SILK); };
const value = (s, x, y, size) => { layers.fab += text(s, x, y, FAB, size); };

function resistor(ref, val, x, y) {
  layers.yard += rect(x - 12.500, y - 18, 119, 36, YARD);
  layers.silk += path(`M${x + 6.500} ${y - 12}v-4.500h80v4.500M${x + 6.500} ${y + 12}v4.500h80v-4.500`, SILK);
  layers.fab += rect(x + 8, y - 15, 77, 30, FAB);
  pad(x, y, 1); pad(x + 93, y, 2);
  value(ref, x + 47, y); value(val, x + 47, y + 28.500); label(ref, x + 47, y - 29);
}
function diode(ref, x, y) {
  layers.yard += rect(x - 12.500, y - 15, 119, 30, YARD);
  layers.silk += rect(x + 20.500, y - 14, 52, 28, SILK) + path(`M${x + 10} ${y}h10M${x + 72} ${y}h10M${x + 27.500} ${y - 14}v28`, SILK) + path(`M${x + 30} ${y - 14}v28`, SILK, 2);
  layers.fab += rect(x + 22.500, y - 12, 48, 24, FAB);
  square(x, y, 1); pad(x + 93, y, 2);
  value(ref, x + 50.500, y, 14.500); value('1N914', x + 47, y + 26); label(ref, x + 47, y - 26); label('K', x, y - 22);
}
function film(ref, val, x, y, h = 36) {
  const top = y - h / 2, o = h / 2 + 12;
  layers.yard += rect(x - 16.500, top, 94, h, YARD);
  layers.silk += rect(x - 15.500, top + 1.500, 92, h - 3, SILK);
  layers.fab += rect(x - 14, top + 3, 89, h - 6, FAB);
  pad(x, y, 1); pad(x + 61, y, 2);
  value(ref, x + 30.500, y); value(val, x + 30.500, y + o + 1); label(ref, x + 30.500, y - o);
}
function testPoint(ref, val, x, y) {
  layers.yard += circ(x, y, 17.500, YARD);
  layers.silk += circ(x, y, 15.800, SILK, 1.500);
  layers.cu += circ(x, y, 15.300, CU, 1.200, 'none', '7 1.500') + circ(x, y, 9.200, CU, 7.800);
  pinInk(x, y, 1);
  label(ref, x, y - 24.500); value(val, x, y + 25.500);
}
function electro(ref, val, cx, y, r, p1, p2, right) {
  layers.silk += path(`M${cx} ${y - r + 1.500}A${r - 1.500} ${r - 1.500} 0 0 1 ${cx} ${y + r - 1.500}z`, SILK, 1, SILK) + rect(p2 - 12.500, y - 12.500, right - p2 + 12.500, 25, 'none', 0, '#000') + circ(cx, y, r - 1.200, SILK);
  layers.fab += circ(cx, y, r - 2.500, FAB);
  layers.yard += circ(cx, y, r, YARD);
  const k = r * .72 + 7, m = r * .5 + 1.500;
  layers.silk += path(`M${cx - k - 4} ${y - m}h8M${cx - k} ${y - m - 4}v8`, SILK);
  layers.fab += path(`M${cx - k + 4} ${y - m + 5}h8M${cx - k + 8} ${y - m + 1}v8`, FAB);
  square(p1, y, 1); pad(p2, y, 2);
  label(ref, cx, y - r - 12.500); value(val, cx, y + r + 11.500);
}
function transistor(ref, x, y) {
  layers.yard += rect(x - 34, y - 34, 67.500, 58, YARD);
  layers.silk += path(`M${x - 23} ${y + 22}A32 32 0 1 1 ${x + 23} ${y + 22}z`, SILK);
  layers.fab += path(`M${x - 22} ${y + 21}A30.500 30.500 0 1 1 ${x + 22} ${y + 21}z`, FAB);
  layers.cu += rect(x - 22.500, y - 9, 14, 18, 'none', 0, CU) + rect(x - 25, y - 11.500, 18, 23, CU);
  for (const dx of [0, 15.500]) layers.cu += `<ellipse cx="${x + dx}" cy="${y}" rx="7" ry="9" fill="${CU}"/><ellipse cx="${x + dx}" cy="${y}" rx="8.500" ry="11" fill="none" stroke="${CU}"/>`;
  for (const dx of [-15.500, 0, 15.500]) layers.cu += circ(x + dx, y, 4.500, 'none', 0, '#000');
  label(ref, x, y - 43.500); value('2SC1815', x, y + 33.500);
}
function led(ref, x, y) {
  layers.yard += rect(x - 14.500, y - 27.500, 59, 55, YARD);
  layers.silk += path(`M${x - 3} ${y - 15}A24 24 0 0 1 ${x + 34} ${y - 15}M${x - 3} ${y + 15}A24 24 0 0 0 ${x + 34} ${y + 15}M${x + 3} ${y - 12}A18 18 0 0 1 ${x + 27} ${y - 12}M${x + 3} ${y + 12}A18 18 0 0 0 ${x + 27} ${y + 12}`, SILK);
  layers.fab += circ(x + 15.500, y, 22, FAB);
  square(x, y, 1, 22); pad(x + 31, y, 2, 11);
  label(ref, x + 15.500, y - 36.500); value('LED_Red', x + 15.500, y + 35.500);
}
function hole(ref, x, y) {
  layers.yard += circ(x, y, 51.500, YARD);
  layers.cu += circ(x, y, 49.500, BLUE, 2) + circ(x, y, 24, 'none', 0, CU);
  label(ref, x, y - 61.500); value('MountingHole', x, y + 61);
}

[['R10', '10k', 483, 340.5], ['R23', '1k', 483, 390.5], ['R11', '220R', 481, 440.5], ['R3', '10k', 481, 489.5], ['R8', '1k', 481, 539.5], ['R13', '10k', 481, 588.5],
 ['R14', '10k', 615, 297.5], ['R16', '10k', 615, 347.5], ['R17', '1k', 613, 440.5], ['R6', '4.7k', 613, 489.5],
 ['R18', '1k', 349, 440.5], ['R2', '511k', 349, 489.5], ['R12', '511k', 349, 582.5], ['R1', '1k', 349, 632.5], ['R15', '100R', 349, 681.5], ['R5', '10k', 349, 731.5],
 ['R7', '51k', 746, 297.5], ['R9', '10k', 746, 347.5], ['R22', '1.5M', 744, 440.5]].forEach(a => resistor(...a));
[['D5', 483, 294.5], ['D2', 614.5, 393.5], ['D1', 349, 536.5]].forEach(a => diode(...a));
[['C5', '0.22uF', 882, 297.5], ['C3', '0.047uF', 989, 297.5], ['C9', '0.22uF', 880, 432.5], ['C10', '0.1uF', 748, 489.5], ['C1', '0.022uF', 733, 539.5],
 ['C8', '1uF', 882, 365.5, 73], ['C2', '1uF', 601, 673.5, 73]].forEach(a => film(...a));

layers.yard += rect(468.500, 737.500, 86, 45, YARD);
layers.silk += path('M478.500 748v-9.500h66v9.500M478.500 771v9.500h66v-9.500', SILK);
layers.fab += rect(480.500, 740.500, 62, 38, FAB);
pad(481, 760, 1); pad(542, 760, 2);
value('C4', 511.500, 760); value('51pF', 511.500, 794.500); label('C4', 511.500, 725);

electro('C11', '10uF', 1007, 362, 33.500, 995, 1019, 1031);
electro('C12', '100uF', 882, 513, 41.500, 866, 897, 909);
electro('C7', '47uF', 751, 604, 33.500, 739, 763, 776);
transistor('Q1', 1003, 448); transistor('Q2', 618, 757);
led('D7', 812, 598); led('D6', 706, 678);
hole('H1', 652, 572.500); hole('H2', 520, 672);
[['TP21', 'D1ab_2', 1097, 297], ['TP16', '3V', 1147, 297], ['TP1', 'In', 1196, 297], ['TP14', '2T', 1071, 347], ['TP10', '1D', 1121, 347], ['TP18', '1V', 1170, 347],
 ['TP23', 'GND_2', 1071, 396], ['TP3', 'GND_3', 1121, 396], ['TP11', '3D', 1068, 445.5], ['TP2', '9V', 954, 504], ['TP15', '3T', 1004, 504], ['TP8', 'D2ab_1', 954, 553],
 ['TP9', 'D2ab_2', 1004, 553], ['TP7', 'Flip_SW_3', 888, 585], ['TP20', 'Flip_SW_2', 888, 635], ['TP4', 'GND_1', 937, 603], ['TP6', 'TestPoint', 832, 656], ['TP13', '1T', 832, 706],
 ['TP12', 'Flip_SW_1', 782, 668], ['TP22', 'D1ab_1', 782, 718], ['TP19', 'Out', 782, 767], ['TP5', 'LED_ind+', 732, 736], ['TP17', '2V', 683, 742]].forEach(a => testPoint(...a));

// U1, DIP-8
layers.yard += rect(336.500, 279.500, 121, 130, YARD);
layers.silk += path('M340 282h98M356 406h82', SILK, 2);
layers.names += text('U1', 397.500, 343.500, SILK, 23.500, 'style="stroke-width:1.2px"').replace('stroke-width=".35"', '').replace('stroke-width="0.35"', 'stroke-width="1.2"');
layers.fab += path('M356.500 282v124M437.500 282v124M357 296l15-14', FAB);
layers.ink += path('M391 344.500h10M396.500 339v11', BLUE);
[298, 329, 360, 391].forEach((y, i) => {
  if (i) layers.cu += circ(348, y, 5.800, CU, 3.500) + circ(348, y, 8.500, CU);
  else layers.cu += rect(341, y - 7, 14, 14, 'none', 0, CU) + rect(339, y - 9, 18, 18, CU) + circ(348, y, 4, 'none', 0, '#000');
  layers.cu += circ(445, y, 5.800, CU, 3.500) + circ(445, y, 8.500, CU);
});

document.getElementById('pcb').innerHTML = layers.fab + layers.silk + layers.yard + layers.names + layers.cu + layers.ink + path('M45.500 240v80M43 280.500h42', '#aaa');

const names = 'F.Cu:840000 B.Cu:008400 F.Adhesive:840084 B.Adhesive:000084 F.Paste:840000 B.Paste:00c2c2 F.Silkscreen:008484 B.Silkscreen:840084 F.Mask:840084 B.Mask:848400 User.Drawings:c2c2c2 User.Comments:000084 User.Eco1:008400 User.Eco2:c2c200 Edge.Cuts:c2c200 Margin:c200c2 F.Courtyard:c2c2c2 B.Courtyard:848484 F.Fab:848484 B.Fab:000084 User.1:c2c2c2 User.2:5994dc User.3:b4dbd2 User.4:d8c852 User.5:c2c2c2 User.6:5994dc'.split(' ');
const eye = '<svg class="eye" viewBox="0 0 16 16"><circle cx="8" cy="8" r="8" fill="#545454"/><path d="M1.500 8q6.500-7.500 13 0-6.500 7.500-13 0z" fill="#f5f5f5"/><circle cx="8" cy="8" r="2.100" fill="#fff" stroke="#545454" stroke-width="1.300"/></svg>';
document.getElementById('layers').innerHTML = names.map((n, i) => {
  const [name, color] = n.split(':');
  return `<div class="row${i ? '' : ' sel'}"><span class="mark">${i ? '' : '<svg viewBox="0 0 6 11"><path d="M0 0l6 5.500-6 5.500z"/></svg>'}</span><em style="background:#${color}"></em>${eye}<span>${name}</span></div>`;
}).join('');
const tick = '<svg viewBox="0 0 16 16"><rect width="16" height="16" rx="3" fill="#005fb8"/><path d="M4 8.500l2.700 2.500L12 5.500" fill="none" stroke="#fff" stroke-width="1.100"/></svg>';
document.getElementById('filters').innerHTML = ['All items', 'Locked items', 'Footprints', 'Text', 'Tracks', 'Vias', 'Pads', 'Graphics', 'Zones', 'Rule Areas', 'Dimensions', 'Other items'].map(n => `<div>${tick}<span>${n}</span></div>`).join('');
```
